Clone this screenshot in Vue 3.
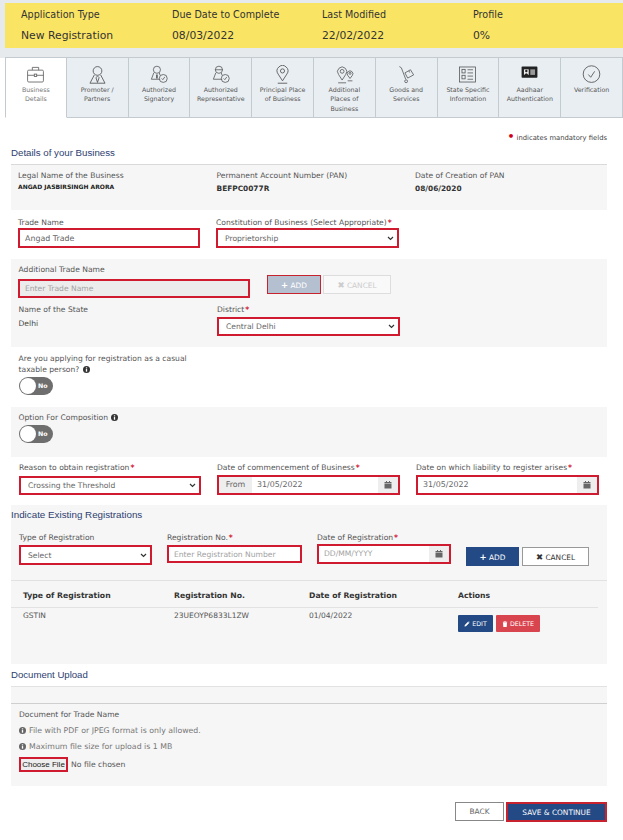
<script setup>
const summary = [
  { label: 'Application Type', value: 'New Registration' },
  { label: 'Due Date to Complete', value: '08/03/2022' },
  { label: 'Last Modified', value: '22/02/2022' },
  { label: 'Profile', value: '0%' },
]
</script>

<template>
  <div class="page">
    <div class="top">
      <div class="banner">
        <div v-for="s in summary" :key="s.label" class="sum">
          <div class="sum-l">{{ s.label }}</div>
          <div class="sum-v">{{ s.value }}</div>
        </div>
      </div>
    </div>

    <div class="tabs">
      <div class="tab active">
        <svg viewBox="0 0 24 24" class="ti"><g fill="none" stroke="#666" stroke-width="1.1"><rect x="2" y="6.500" width="20" height="15" rx="1.500"/><path d="M8 6.500V3h8v3.500M2 13h20"/><rect x="10.500" y="11.500" width="3" height="3" fill="#fff"/></g></svg>
        <span>Business<br>Details</span>
      </div>
      <div class="tab">
        <svg viewBox="0 0 24 24" class="ti"><g fill="none" stroke="#555" stroke-width="1.100"><circle cx="12" cy="7.500" r="5.500"/><path d="M8 12.500 2.500 23h19L16 12.500M10 16l2-2 2 2-2 6z"/></g></svg>
        <span>Promoter /<br>Partners</span>
      </div>
      <div class="tab">
        <svg viewBox="0 0 24 24" class="ti"><g fill="none" stroke="#555" stroke-width="1"><circle cx="10" cy="6" r="4.500"/><path d="M6 10 3 18h11M13 10l1 3"/><circle cx="18" cy="17" r="5"/><path d="m16 17 1.500 1.500L20 15"/></g><path d="M9 12h2v5H9z" fill="#555"/></svg>
        <span>Authorized<br>Signatory</span>
      </div>
      <div class="tab">
        <svg viewBox="0 0 24 24" class="ti"><g fill="none" stroke="#555" stroke-width="1"><circle cx="10" cy="6" r="4.500"/><path d="M5 6h10M6 10 3 18h11M13 10l1 3"/><circle cx="18" cy="17" r="5"/><path d="m16 17 1.500 1.500L20 15"/></g></svg>
        <span>Authorized<br>Representative</span>
      </div>
      <div class="tab">
        <svg viewBox="0 0 24 24" class="ti"><g fill="none" stroke="#555" stroke-width="1.100"><path d="M12 20 6.500 11.500a6.800 6.800 0 1 1 11 0z"/><circle cx="12" cy="7.500" r="2.600"/><path d="M6 23h12"/></g></svg>
        <span>Principal Place<br>of Business</span>
      </div>
      <div class="tab">
        <svg viewBox="0 0 24 24" class="ti"><g fill="none" stroke="#555" stroke-width="1"><path d="M9 19 4.500 12a5.800 5.800 0 1 1 9 0z"/><circle cx="9" cy="8" r="2.400"/><path d="M4 22.500h10"/><path d="M19 17l-3-4a3.600 3.600 0 1 1 6 0z"/><circle cx="19" cy="10.500" r="1.300"/><path d="M16 20h6"/></g></svg>
        <span>Additional<br>Places of<br>Business</span>
      </div>
      <div class="tab">
        <svg viewBox="0 0 24 24" class="ti"><g fill="none" stroke="#555" stroke-width="1"><path d="m3 2 2.500 1.500L11 18"/><circle cx="11.500" cy="20.500" r="1.800"/><path d="m10 10 7-4 4 6.500-7.500 4z"/><path d="m15 7.500 1 2"/></g></svg>
        <span>Goods and<br>Services</span>
      </div>
      <div class="tab">
        <svg viewBox="0 0 24 24" class="ti"><g fill="none" stroke="#555" stroke-width="1"><rect x="2" y="2.500" width="20" height="19"/><rect x="5" y="5.500" width="4" height="4.500"/><rect x="5" y="13" width="4" height="4.500"/><path d="M12 6h7M12 10h7M12 14h7M12 18h7"/></g></svg>
        <span>State Specific<br>Information</span>
      </div>
      <div class="tab">
        <svg viewBox="0 0 24 24" class="ti"><rect x="2" y="2" width="20" height="14" rx="1" fill="#222"/><rect x="5" y="5.500" width="6" height="7" fill="#eee"/><rect x="13" y="5.500" width="6" height="7" fill="#999"/><circle cx="8" cy="7.500" r="1.500" fill="#222"/><path d="M5.500 12.500q2.500-4 5 0z" fill="#222"/></svg>
        <span>Aadhaar<br>Authentication</span>
      </div>
      <div class="tab last">
        <svg viewBox="0 0 24 24" class="ti"><g fill="none" stroke="#555" stroke-width="1.100"><circle cx="12" cy="11.500" r="10.500"/><path d="m8 12 3 3.500 5-7.500"/></g></svg>
        <span>Verification</span>
      </div>
    </div>

    <div class="mand"><b class="dot">•</b> indicates mandatory fields</div>

    <h2 class="head first">Details of your Business</h2>

    <section class="panel info">
      <div class="cols">
        <div><div class="lbl">Legal Name of the Business</div><div class="legal">ANGAD JASBIRSINGH ARORA</div></div>
        <div><div class="lbl">Permanent Account Number (PAN)</div><div class="strong">BEFPC0077R</div></div>
        <div><div class="lbl">Date of Creation of PAN</div><div class="strong">08/06/2020</div></div>
      </div>
    </section>

    <section class="trade">
      <div class="cols">
        <div><label class="lbl">Trade Name</label><input class="fld big" value="Angad Trade"></div>
        <div><label class="lbl">Constitution of Business (Select Appropriate)<i class="req">*</i></label>
          <select class="fld sel"><option>Proprietorship</option></select></div>
      </div>
    </section>

    <section class="panel addl">
      <label class="lbl">Additional Trade Name</label>
      <div class="addl-row">
        <input class="fld dis" placeholder="Enter Trade Name" disabled>
        <button class="btn add-dis"><b>+</b> ADD</button>
        <button class="btn cancel-dis"><b>✖</b> CANCEL</button>
      </div>
      <div class="cols state">
        <div><div class="lbl">Name of the State</div><div class="val">Delhi</div></div>
        <div><label class="lbl">District<i class="req">*</i></label>
          <select class="fld sel"><option>Central Delhi</option></select></div>
      </div>
    </section>

    <section class="casual">
      <div class="lbl two">Are you applying for registration as a casual<br>taxable person?
        <svg class="inf" viewBox="0 0 16 16"><circle cx="8" cy="8" r="8" fill="#333"/><rect x="6.500" y="7" width="3" height="6" fill="#fff"/><rect x="6.500" y="3" width="3" height="2.500" fill="#fff"/></svg>
      </div>
      <div class="toggle"><span class="knob"></span><span class="no">No</span></div>
    </section>

    <section class="panel compo">
      <div class="lbl">Option For Composition
        <svg class="inf" viewBox="0 0 16 16"><circle cx="8" cy="8" r="8" fill="#333"/><rect x="6.500" y="7" width="3" height="6" fill="#fff"/><rect x="6.500" y="3" width="3" height="2.500" fill="#fff"/></svg>
      </div>
      <div class="toggle"><span class="knob"></span><span class="no">No</span></div>
    </section>

    <section class="reason">
      <div class="cols">
        <div><label class="lbl">Reason to obtain registration<i class="req">*</i></label>
          <select class="fld sel"><option>Crossing the Threshold</option></select></div>
        <div><label class="lbl">Date of commencement of Business<i class="req">*</i></label>
          <div class="group">
            <span class="from">From</span><span class="gval">31/05/2022</span>
            <span class="cal"><svg viewBox="0 0 16 16"><path d="M1 5h14v10H1zM1 2h14v2H1zM4 0h2v3H4zM10 0h2v3h-2z" fill="#666"/></svg></span>
          </div></div>
        <div><label class="lbl">Date on which liability to register arises<i class="req">*</i></label>
          <div class="group">
            <span class="gval">31/05/2022</span>
            <span class="cal"><svg viewBox="0 0 16 16"><path d="M1 5h14v10H1zM1 2h14v2H1zM4 0h2v3H4zM10 0h2v3h-2z" fill="#666"/></svg></span>
          </div></div>
      </div>
    </section>

    <section class="panel exist">
      <h2 class="head exist-h">Indicate Existing Registrations</h2>
      <div class="exist-form">
        <div class="ef1"><label class="lbl">Type of Registration</label><select class="fld sel"><option>Select</option></select></div>
        <div class="ef2"><label class="lbl">Registration No.<i class="req">*</i></label><input class="fld" placeholder="Enter Registration Number"></div>
        <div class="ef3"><label class="lbl">Date of Registration<i class="req">*</i></label>
          <div class="group">
            <span class="gval ph">DD/MM/YYYY</span>
            <span class="cal"><svg viewBox="0 0 16 16"><path d="M1 5h14v10H1zM1 2h14v2H1zM4 0h2v3H4zM10 0h2v3h-2z" fill="#666"/></svg></span>
          </div></div>
        <button class="btn primary"><b>+</b> ADD</button>
        <button class="btn outline"><b>✖</b> CANCEL</button>
      </div>
      <div class="divider"></div>
      <table class="tbl">
        <thead><tr><th>Type of Registration</th><th>Registration No.</th><th>Date of Registration</th><th>Actions</th></tr></thead>
        <tbody><tr>
          <td>GSTIN</td><td>23UEOYP6833L1ZW</td><td>01/04/2022</td>
          <td class="acts">
            <button class="mini edit"><svg viewBox="0 0 12 12"><path d="M1 11l.6-3L8 1.600 10.400 4 4 10.400zM8.800 1l.8-.6 2 2-.6.800z" fill="#fff"/></svg>EDIT</button>
            <button class="mini del"><svg viewBox="0 0 12 12"><path d="M2 3h8l-.6 9H2.600zM1.500 1.500h9v1h-9zM4.500 .5h3v1h-3z" fill="#fff"/></svg>DELETE</button>
          </td>
        </tr></tbody>
      </table>
    </section>

    <h2 class="head doc">Document Upload</h2>
    <div class="strip"></div>
    <section class="panel upload">
      <div class="lbl">Document for Trade Name</div>
      <div class="hint"><svg class="inf g" viewBox="0 0 16 16"><circle cx="8" cy="8" r="8" fill="#666"/><rect x="6.500" y="7" width="3" height="6" fill="#fff"/><rect x="6.500" y="3" width="3" height="2.500" fill="#fff"/></svg>File with PDF or JPEG format is only allowed.</div>
      <div class="hint"><svg class="inf g" viewBox="0 0 16 16"><circle cx="8" cy="8" r="8" fill="#666"/><rect x="6.500" y="7" width="3" height="6" fill="#fff"/><rect x="6.500" y="3" width="3" height="2.500" fill="#fff"/></svg>Maximum file size for upload is 1 MB</div>
      <div class="filerow"><button class="choose">Choose File</button><span>No file chosen</span></div>
    </section>

    <div class="foot">
      <button class="btn back">BACK</button>
      <button class="btn save">SAVE &amp; CONTINUE</button>
    </div>
  </div>
</template>

<style>
html, body { margin: 0; background: #fff; }
</style>

<style scoped>
.page { width: 623px; height: 840px; overflow: hidden; font-family: "DejaVu Sans", Verdana, sans-serif; color: #444; font-size: 7.600px; background: #fff; }
.top { background: #e6eaec; height: 58px; padding: 3px 0 0 5px; box-sizing: border-box; }
.banner { background: #fae463; height: 45px; display: grid; grid-template-columns: 151px 150px 151px 1fr; padding-left: 16px; align-items: center; color: #333; }
.sum-l { font-size: 9.600px; line-height: 12px; margin-bottom: 8px; }
.sum-v { font-size: 10.800px; line-height: 13px; }
.tabs { display: flex; padding-left: 5px; height: 62px; margin-top: -1px; background: linear-gradient(#e6eaec 1px, #fff 1px); }
.tab { width: 61.800px; height: 61px; box-sizing: border-box; background: #e9eef2; border: 1px solid #c3cbd1; border-left: 0; text-align: center; font-size: 6.300px; line-height: 9.300px; color: #555; padding-top: 7px; display: flex; flex-direction: column; align-items: center; }
.tab.active { background: #fff; border-bottom-color: #fff; border-left: 1px solid #c3cbd1; color: #777; }
.tab span { display: block; margin-top: 1px; }
.ti { width: 19px; height: 19px; display: block; flex: none; }
.mand { height: 22px; margin-top: 5px; text-align: right; padding-right: 16px; font-size: 6.800px; line-height: 28px; box-sizing: border-box; color: #444; }
.dot { color: #d0021b; font-size: 11px; line-height: 8px; }
.head { margin: 0; font-family: "Liberation Sans", Arial, sans-serif; font-weight: 400; color: #2c3e70; font-size: 9.700px; line-height: 13px; padding-left: 11px; }
.head.first { height: 18px; }
.panel { background: #f6f6f6; margin: 0 16px 0 11px; }
.cols { display: grid; grid-template-columns: 183px 183px 183px; column-gap: 16px; }
.lbl { display: block; color: #555; line-height: 9px; font-size: 7.600px; }
.req { color: #d0021b; font-style: normal; font-weight: 700; margin-left: 1px; }
.info { height: 46px; border-top: 1px solid #dadada; box-sizing: border-box; padding: 6px 0 0 7px; }
.info .cols { grid-template-columns: 198.500px 198.500px 170px; column-gap: 0; }
.legal { font-size: 6px; font-weight: 700; color: #222; margin-top: 3px; line-height: 8px; }
.strong { font-size: 7.400px; font-weight: 700; color: #333; margin-top: 4px; line-height: 9px; }
.fld { display: block; width: 100%; height: 20px; box-sizing: border-box; border: 2px solid #cf1a30; background: #fff; color: #666; font-family: inherit; font-size: 7.600px; padding: 0 5px; margin-top: 1px; border-radius: 0; outline: 0; }
.fld.big { font-size: 7.900px; }
.fld.sel { appearance: none; -webkit-appearance: none; padding: 0 16px 0 7px; background-repeat: no-repeat; background-position: right 3px center; background-size: 7px 5px; background-image: url("data:image/svg+xml,%3Csvg xmlns='http://www.w3.org/2000/svg' viewBox='0 0 7 5'%3E%3Cpath d='M1 1l2.500 2.500L6 1' fill='none' stroke='%23333' stroke-width='1.200'/%3E%3C/svg%3E"); }
.fld::placeholder { color: #a2a2a2; opacity: 1; }
.trade { height: 49px; padding: 8px 0 0 18px; box-sizing: border-box; }
.trade .cols { column-gap: 16px; grid-template-columns: 182px 183px; }
.addl { height: 88px; padding: 6px 0 0 7.500px; box-sizing: border-box; }
.addl-row { display: flex; align-items: flex-start; height: 30px; }
.addl-row .fld { width: 232px; height: 19px; margin: 5px 0 0 -.5px; background: #ececec; }
.btn { box-sizing: border-box; font-family: inherit; font-size: 7.400px; height: 19px; padding: 0; cursor: pointer; border-radius: 0; }
.btn b { font-size: 8.500px; }
.add-dis { width: 54px; margin: 1px 0 0 17px; background: #b4bfd0; color: #fff; border: 1px solid #c9222f; }
.cancel-dis { width: 68px; margin: 1px 0 0 2px; background: #f9f9f9; color: #ccc; border: 1px solid #ddd; }
.state { margin-top: 1px; grid-template-columns: 198.500px 183px; column-gap: 0; }
.val { margin-top: 5px; line-height: 9px; }
.state .fld { height: 19px; margin-top: 3px; }
.casual { height: 60px; padding: 6px 0 0 18.500px; box-sizing: border-box; }
.two { line-height: 11px; }
.inf { width: 7px; height: 7px; vertical-align: -1px; margin-left: 1px; }
.inf.g { margin: 0 3px 0 0; flex: none; }
.toggle { position: relative; width: 34px; height: 18px; border-radius: 9px; background: #6e6e6e; margin-top: 2px; }
.casual .toggle { margin-top: 2px; }
.knob { position: absolute; left: 1px; top: 1px; width: 16px; height: 16px; border-radius: 50%; background: #fff; }
.no { position: absolute; right: 5px; top: 0; line-height: 18px; color: #fff; font-weight: 700; font-size: 6.300px; }
.compo { height: 50px; padding: 6px 0 0 7.500px; box-sizing: border-box; }
.compo .toggle { margin-top: 3px; }
.reason { height: 48px; padding: 6px 0 0 19px; box-sizing: border-box; }
.reason .cols { column-gap: 16px; grid-template-columns: 182px 183px 183px; }
.reason .fld { height: 19px; margin-top: 4px; }
.group { display: flex; height: 20px; margin-top: 3px; box-sizing: border-box; border: 2px solid #cf1a30; background: #fff; color: #666; line-height: 16px; font-size: 7.900px; }
.from { width: 33px; background: #eee; text-align: center; }
.gval { flex: 1; padding-left: 5px; }
.gval.ph { color: #a2a2a2; font-size: 7.600px; }
.cal { width: 20px; background: #eee; display: flex; align-items: center; justify-content: center; }
.cal svg { width: 8px; height: 8px; display: block; }
.exist { height: 159px; padding-top: 3px; box-sizing: border-box; }
.exist-h { padding-left: 0; font-size: 9.800px; height: 16px; }
.exist-form { display: flex; align-items: flex-start; padding: 9px 0 0 8px; height: 44px; box-sizing: border-box; }
.ef1 { width: 133px; }
.ef1 .fld { margin-top: 3px; height: 20px; }
.ef2 { width: 135px; margin-left: 15px; }
.ef2 .fld { height: 18px; margin-top: 3px; }
.ef3 { width: 134px; margin-left: 15px; }
.ef3 .group { margin-top: 2px; }
.primary { width: 53px; margin: 14px 0 0 15px; background: #234a85; color: #fff; border: 1px solid #234a85; }
.outline { width: 67px; margin: 14px 0 0 3px; background: #fff; color: #333; border: 1px solid #999; }
.divider { height: 1px; background: #e2e2e2; margin-top: 12px; }
.tbl { width: 587px; border-collapse: collapse; table-layout: fixed; }
.tbl th:nth-child(1), .tbl td:nth-child(1) { width: 151px; padding-left: 12px; box-sizing: content-box; }
.tbl th:nth-child(2) { width: 135px; }
.tbl th:nth-child(3) { width: 149px; }
.tbl th { text-align: left; font-size: 7.700px; color: #333; height: 24px; border-bottom: 1px solid #e2e2e2; padding: 2px 0 0; box-sizing: border-box; }
.tbl td { color: #555; padding: 3px 0 0; vertical-align: top; font-size: 7.500px; }
.tbl td.acts { display: flex; gap: 3px; padding-top: 7px; }
.mini { height: 17px; border: 0; border-radius: 1px; color: #fff; font-family: inherit; font-size: 6.300px; padding: 0; display: flex; align-items: center; justify-content: center; gap: 2px; }
.mini svg { width: 6px; height: 6px; }
.edit { width: 35px; background: #234a85; }
.del { width: 44px; background: #d9454f; }
.doc { padding-top: 4px; height: 18px; font-size: 9.600px; }
.strip { background: #f6f6f6; height: 16px; margin: 0 16px 0 11px; border-top: 1px solid #e2e2e2; border-bottom: 1px solid #cfcfcf; }
.upload { height: 82px; padding: 6px 0 0 8px; box-sizing: border-box; }
.hint { color: #777; margin-top: 7px; line-height: 9px; display: flex; align-items: center; font-size: 7.800px; }
.filerow { display: flex; align-items: center; margin-top: 6px; gap: 3px; color: #555; font-size: 7.700px; }
.choose { width: 49px; height: 15px; box-sizing: border-box; border: 2px solid #cf1a30; background: #eee; color: #222; font-family: "Liberation Sans", Arial, sans-serif; font-size: 8px; padding: 0; }
.foot { display: flex; justify-content: flex-end; padding: 16px 16px 0 0; gap: 2px; }
.back { width: 49px; height: 19px; background: #fff; border: 1px solid #888; color: #666; }
.save { width: 101px; height: 20px; background: #234a85; border: 2px solid #c9222f; color: #fff; font-size: 7.400px; }
</style>
